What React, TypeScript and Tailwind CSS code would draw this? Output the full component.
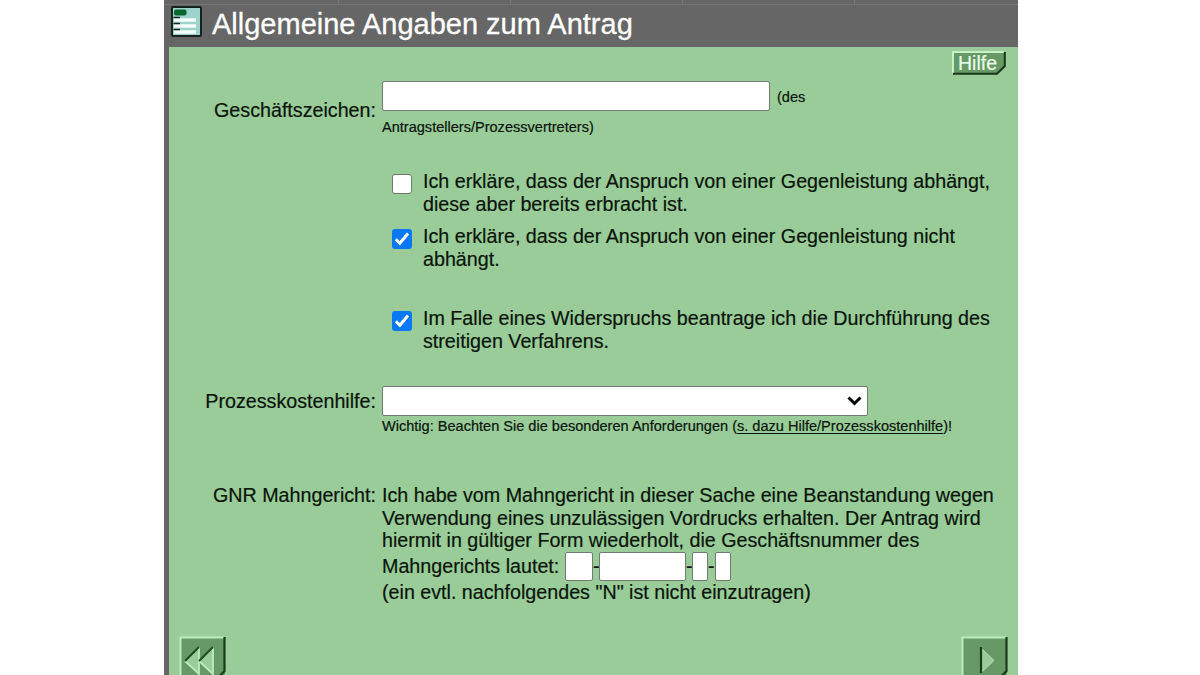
import type { ReactNode } from "react";

function FormIcon() {
  return (
    <svg width="31" height="31" viewBox="0 0 31 31" className="shrink-0">
      <rect x="1" y="1" width="29" height="29" rx="1" fill="#9dd3ca" stroke="#152421" strokeWidth="2" />
      <rect x="3" y="3.5" width="12.5" height="6" rx="2" fill="#08672f" />
      <path d="M3 12.3h22v3.4H3zM3 18.3h22v3.4H3zM3 24.3h22v3.4H3z" fill="#f6fdfb" />
      <path d="M2.5 11.5h6.5M2.5 17.5h6.5M2.5 23.5h6.5" stroke="#152421" strokeWidth="1.5" />
    </svg>
  );
}

function Checkbox({ checked = false }: { checked?: boolean }) {
  return (
    <span
      role="checkbox"
      aria-checked={checked}
      className={
        checked
          ? "mt-1 h-5 w-5 shrink-0 rounded-[3px] bg-[#0878f5]"
          : "mt-1 h-5 w-5 shrink-0 rounded-[3px] border border-[#747474] bg-white"
      }
    >
      {checked && (
        <svg width="20" height="20" viewBox="0 0 20 20">
          <path d="M3.8 10.3 7.8 14.3 16 4.5" fill="none" stroke="white" strokeWidth="3" />
        </svg>
      )}
    </span>
  );
}

function Declaration({ checked, children }: { checked?: boolean; children: ReactNode }) {
  return (
    <label className="flex h-[46px] gap-[11px] pl-[223px]">
      <Checkbox checked={checked} />
      <span className="whitespace-nowrap">{children}</span>
    </label>
  );
}

function Label({ children }: { children: ReactNode }) {
  return <div className="w-[207px] shrink-0 whitespace-nowrap text-right">{children}</div>;
}

const field = "block rounded-[2px] border border-[#727872] bg-white outline-none";

export default function App() {
  return (
    <div className="h-[675px] w-[1200px] overflow-hidden bg-white pl-[164px] font-['Liberation_Sans',Arial,sans-serif] text-[#0a140a]">
      <div className="flex h-full w-[854px] flex-col bg-[#666666]">
        <header className="flex h-[47px] shrink-0 flex-col">
          <div className="flex h-[5px] gap-[2px] border-b border-[#777777] pl-[5px]">
            <span className="h-1 w-[170px] border-r border-[#777777]" />
            <span className="h-1 w-[170px] border-r border-[#777777]" />
            <span className="h-1 w-[170px] border-r border-[#777777]" />
            <span className="h-1 w-[170px] border-r border-[#777777]" />
          </div>
          <div className="flex gap-[10px] pl-[7px] pt-px">
            <FormIcon />
            <h1 className="mt-px whitespace-nowrap text-[29px] leading-[34px] text-white [-webkit-text-stroke:0.3px_white]">Allgemeine Angaben zum Antrag</h1>
          </div>
        </header>
        <main className="ml-[5px] flex min-h-0 flex-1 flex-col bg-[#99cc99] text-[19.7px] leading-[22.7px] [-webkit-text-stroke:0.2px_#0a140a]">
          <div className="flex h-[34px] justify-end pr-[12px] pt-[4px]">
            <button className="relative block h-6 w-[54px]">
              <svg width="54" height="24" viewBox="0 0 54 24" className="absolute inset-0">
                <path d="M1 1H53V15L45 23H1Z" fill="#669966" />
                <path d="M1 22V1H52" fill="none" stroke="#c6f3c6" strokeWidth="2" />
                <path d="M1 22.8H45L52.8 15V1" fill="none" stroke="#183718" strokeWidth="2" />
              </svg>
              <span className="relative block pl-[6px] text-left text-[19.5px] leading-[22px] text-[#eaffea] [-webkit-text-stroke:0.2px_#eaffea]">Hilfe</span>
            </button>
          </div>

          <div className="flex h-[88px] gap-[6px]">
            <div className="pt-[18px]"><Label>Geschäftszeichen:</Label></div>
            <div className="text-[14.55px]">
              <div className="flex items-center gap-[7px]">
                <input className={`${field} h-[30px] w-[388px]`} />
                <span className="pt-[2px]">(des</span>
              </div>
              <div className="pt-[5px]">Antragstellers/Prozessvertreters)</div>
            </div>
          </div>

          <div className="flex flex-col pt-px">
            <Declaration>
              Ich erkläre, dass der Anspruch von einer Gegenleistung abhängt,
              <br />
              diese aber bereits erbracht ist.
            </Declaration>
            <div className="mt-[9px]">
              <Declaration checked>
                Ich erkläre, dass der Anspruch von einer Gegenleistung nicht
                <br />
                abhängt.
              </Declaration>
            </div>
            <div className="mt-[36px]">
              <Declaration checked>
                Im Falle eines Widerspruchs beantrage ich die Durchführung des
                <br />
                streitigen Verfahrens.
              </Declaration>
            </div>
          </div>

          <div className="mt-[33px] flex h-[98px] gap-[6px]">
            <div className="pt-[4px]"><Label>Prozesskostenhilfe:</Label></div>
            <div className="whitespace-nowrap text-[14.55px]">
              <button aria-label="Prozesskostenhilfe" className={`${field} flex h-[30px] w-[486px] items-center justify-end pr-[5px]`}>
                <svg width="15" height="10" viewBox="0 0 15 10" className="ml-auto">
                  <path d="m1.5 1.5 6 6 6-6" fill="none" stroke="black" strokeWidth="3" />
                </svg>
              </button>
              <div className="-mt-px">
                Wichtig: Beachten Sie die besonderen Anforderungen (<u className="underline-offset-2">s. dazu Hilfe/Prozesskostenhilfe</u>)!
              </div>
            </div>
          </div>

          <div className="flex gap-[6px] whitespace-nowrap">
            <Label>GNR Mahngericht:</Label>
            <div>
              Ich habe vom Mahngericht in dieser Sache eine Beanstandung wegen
              <br />
              Verwendung eines unzulässigen Vordrucks erhalten. Der Antrag wird
              <br />
              hiermit in gültiger Form wiederholt, die Geschäftsnummer des
              <div className="flex h-[29px] items-center">
                <span className="w-[183px]">Mahngerichts lautet:</span>
                <input className={`${field} h-[29px] w-[28px]`} />
                <span className="w-[6px]">-</span>
                <input className={`${field} h-[29px] w-[87px]`} />
                <span className="w-[6px]">-</span>
                <input className={`${field} h-[29px] w-[16px]`} />
                <span className="w-[7px]">-</span>
                <input className={`${field} h-[29px] w-[16px]`} />
              </div>
              <div>(ein evtl. nachfolgendes "N" ist nicht einzutragen)</div>
            </div>
          </div>

          <div className="mt-auto flex h-[39px] shrink-0 justify-between overflow-hidden pl-[10px] pr-[10px]">
            <button aria-label="Zurück" className="h-[46px] w-[47px]">
              <svg width="47" height="46" viewBox="0 0 47 46">
                <path d="M1 1H46V38L39 45H1Z" fill="#669966" />
                <path d="M1.5 45V1.5H45" fill="none" stroke="#b9edb9" strokeWidth="2" />
                <path d="M45.5 1V35L37 44" fill="none" stroke="#183b18" strokeWidth="2.2" />
                <path d="M20 11V38L6 25ZM34 11V38L20 25Z" fill="#99cc99" />
                <path d="M20 11V38L6 25M34 11V38L20 25" fill="none" stroke="#b9edb9" strokeWidth="1.8" />
                <path d="M6 25 20 11M20 25 34 11" stroke="#204b20" strokeWidth="2" />
              </svg>
            </button>
            <button aria-label="Weiter" className="h-[46px] w-[47px]">
              <svg width="47" height="46" viewBox="0 0 47 46">
                <path d="M1 1H46V38L39 45H1Z" fill="#669966" />
                <path d="M1.5 45V1.5H45" fill="none" stroke="#b9edb9" strokeWidth="2" />
                <path d="M45.5 1V35L37 44" fill="none" stroke="#183b18" strokeWidth="2.2" />
                <path d="M20 12V37L33 24.5Z" fill="#99cc99" stroke="#b0e2b0" />
                <path d="M20 11V37" stroke="#183b18" strokeWidth="2.2" />
              </svg>
            </button>
          </div>
        </main>
      </div>
    </div>
  );
}
